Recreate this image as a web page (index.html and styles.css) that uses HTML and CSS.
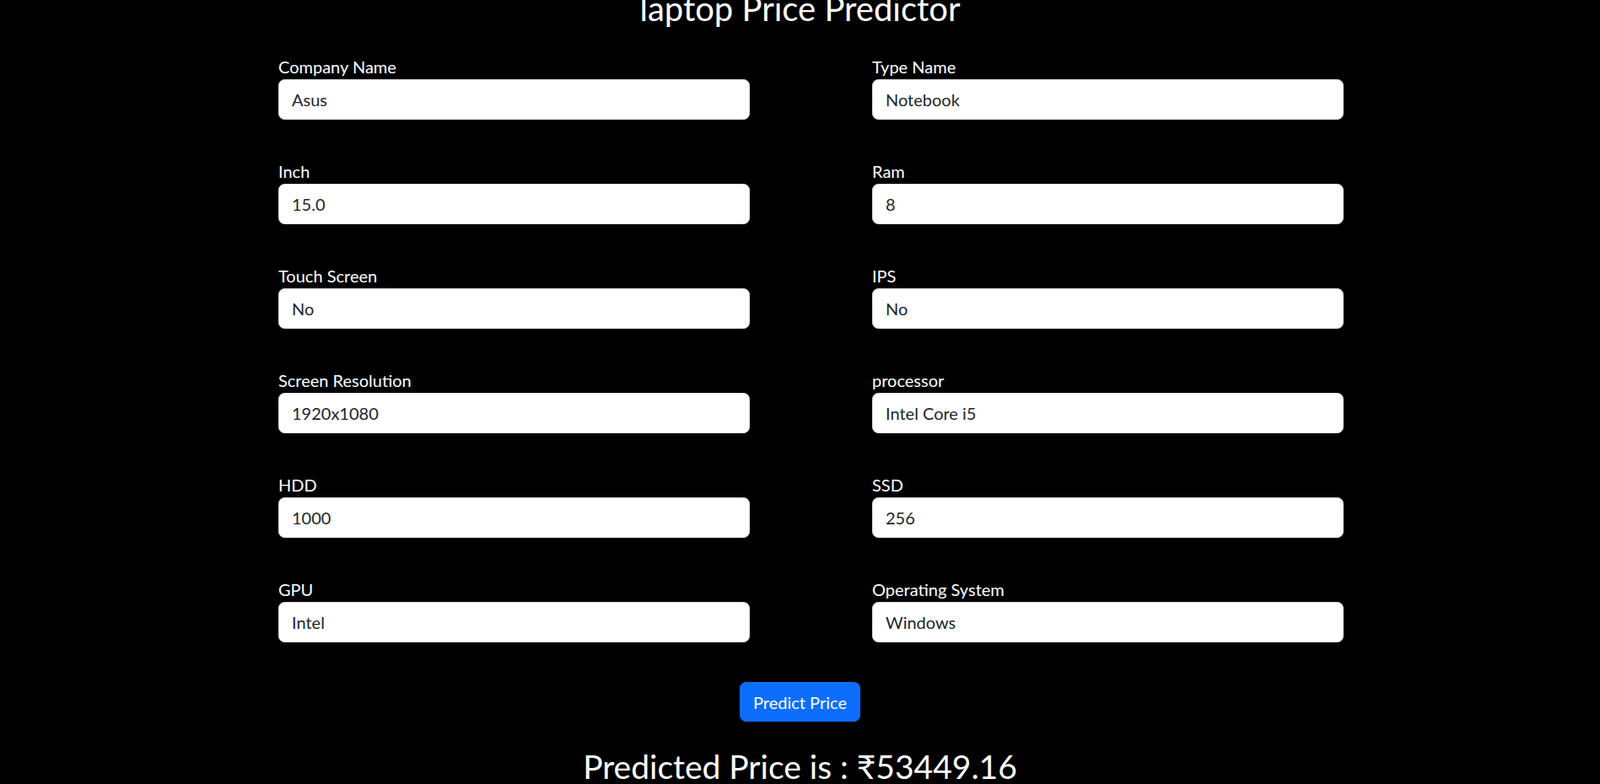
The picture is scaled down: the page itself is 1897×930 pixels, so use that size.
FILE: index.html
```html
<!DOCTYPE html>
<html lang="en">
<head>
<meta charset="utf-8">
<title>laptop Price Predictor</title>
<link rel="stylesheet" href="styles.css">
</head>
<body>
<h3 class="title">laptop Price Predictor</h3>
<form class="form">
  <div class="field"><label>Company Name</label><input class="control" type="text" value="Asus"></div>
  <div class="field"><label>Type Name</label><input class="control" type="text" value="Notebook"></div>
  <div class="field"><label>Inch</label><input class="control" type="text" value="15.0"></div>
  <div class="field"><label>Ram</label><input class="control" type="text" value="8"></div>
  <div class="field"><label>Touch Screen</label><input class="control" type="text" value="No"></div>
  <div class="field"><label>IPS</label><input class="control" type="text" value="No"></div>
  <div class="field"><label>Screen Resolution</label><input class="control" type="text" value="1920x1080"></div>
  <div class="field"><label>processor</label><input class="control" type="text" value="Intel Core i5"></div>
  <div class="field"><label>HDD</label><input class="control" type="text" value="1000"></div>
  <div class="field"><label>SSD</label><input class="control" type="text" value="256"></div>
  <div class="field"><label>GPU</label><input class="control" type="text" value="Intel"></div>
  <div class="field"><label>Operating System</label><input class="control" type="text" value="Windows"></div>
</form>
<div class="actions"><button class="btn" type="button">Predict Price</button></div>
<h2 class="result">Predicted Price is : ₹53449.16</h2>
</body>
</html>
```
FILE: styles.css
```css
html, body {
  margin: 0;
  padding: 0;
  background: #000;
  color: #fff;
  font-family: Lato, "Noto Sans", "DejaVu Sans", sans-serif;
  overflow: hidden;
}

.title {
  margin: -14px 0 0;
  font-size: 40px;
  line-height: 48px;
  font-weight: 400;
  text-align: center;
}

.form {
  display: grid;
  grid-template-columns: 559px 559px;
  column-gap: 145px;
  row-gap: 46.6px;
  width: 1263px;
  margin: 30px 0 0 330px;
}

.field label {
  display: block;
  font-size: 20px;
  line-height: 30px;
}

.control {
  display: block;
  width: 100%;
  height: 47.5px;
  box-sizing: border-box;
  margin: 0;
  padding: 7.5px 15px;
  border: 1.25px solid #dee2e6;
  border-radius: 7.5px;
  background: #fff;
  color: #212529;
  font-family: inherit;
  font-size: 20px;
  line-height: 30px;
  outline: none;
}

.actions {
  margin-top: 47px;
  text-align: center;
}

.btn {
  height: 47.5px;
  box-sizing: border-box;
  padding: 7.5px 15px;
  border: 1.25px solid #0d6efd;
  border-radius: 7.5px;
  background: #0d6efd;
  color: #fff;
  font-family: inherit;
  font-size: 20px;
  line-height: 30px;
  cursor: pointer;
}

.result {
  margin: 29px 0 0;
  font-size: 39px;
  line-height: 48px;
  font-weight: 400;
  text-align: center;
}
```
